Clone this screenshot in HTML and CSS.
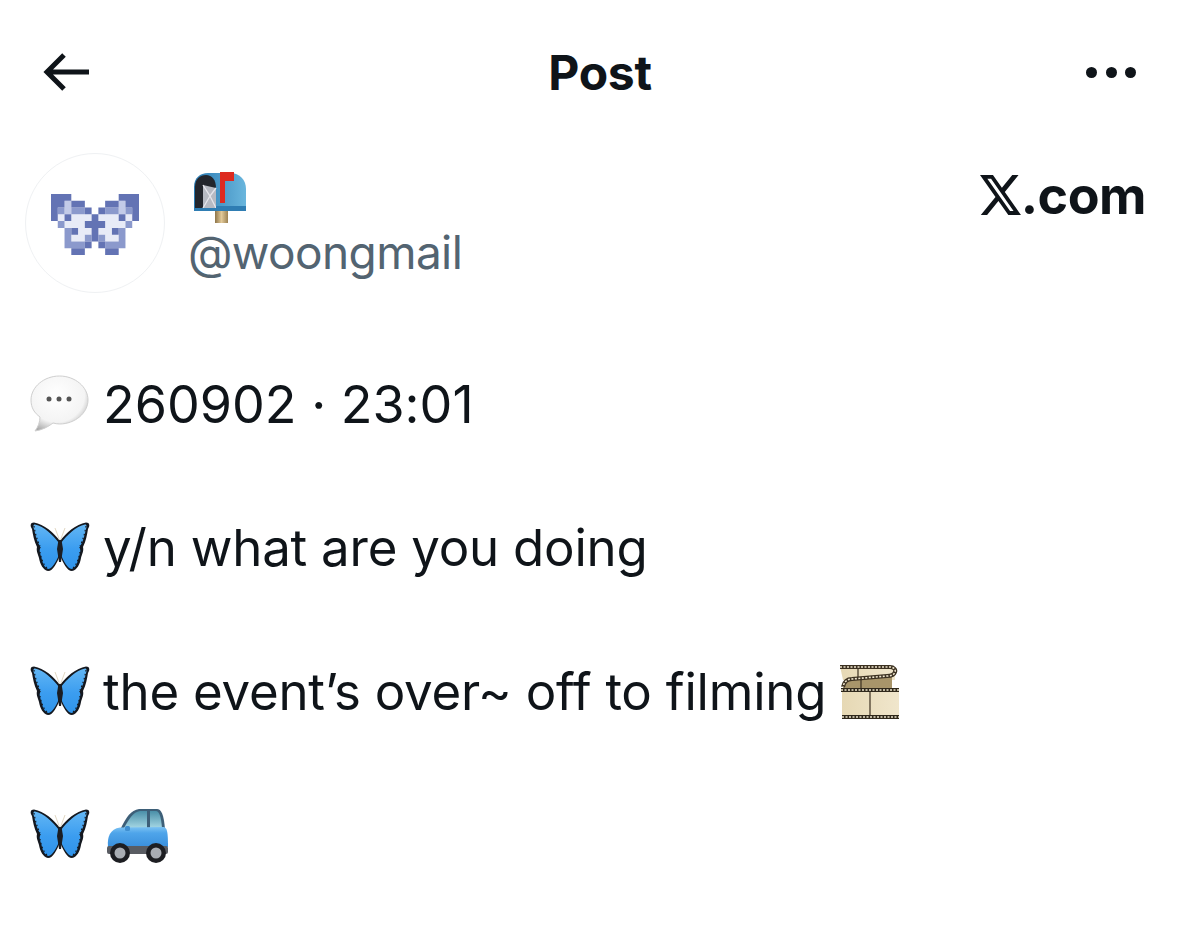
FILE: index.html
```html
<!DOCTYPE html>
<html lang="en">
<head>
    <meta charset="UTF-8">
    <meta name="viewport" content="width=device-width, initial-scale=1.0">
    <title>Post</title>
    <link rel="stylesheet" href="styles.css">
</head>
<body>
    <!-- shared emoji drawings -->
    <svg class="defs" width="0" height="0">
        <defs>
            <linearGradient id="wing" x1="0" y1="0" x2="0" y2="1">
                <stop offset="0" stop-color="#62b6f4"/>
                <stop offset="0.55" stop-color="#3b9df0"/>
                <stop offset="1" stop-color="#2f93ea"/>
            </linearGradient>
            <linearGradient id="carbody" x1="0" y1="0" x2="0" y2="1">
                <stop offset="0" stop-color="#7cc2f2"/>
                <stop offset="0.3" stop-color="#4fa5ea"/>
                <stop offset="1" stop-color="#3a8fdc"/>
            </linearGradient>
            <linearGradient id="glass" x1="0" y1="0" x2="0" y2="1">
                <stop offset="0" stop-color="#4a8fa8"/>
                <stop offset="1" stop-color="#a5d7e4"/>
            </linearGradient>
            <linearGradient id="box" x1="0" y1="0" x2="1" y2="0">
                <stop offset="0" stop-color="#2a7ab2"/>
                <stop offset="1" stop-color="#6ab6dd"/>
            </linearGradient>
            <linearGradient id="post" x1="0" y1="0" x2="1" y2="0">
                <stop offset="0" stop-color="#8d7448"/>
                <stop offset="0.5" stop-color="#e2c998"/>
                <stop offset="1" stop-color="#9c8253"/>
            </linearGradient>
            <linearGradient id="strip" x1="0" y1="0" x2="1" y2="0">
                <stop offset="0" stop-color="#e6d8b4"/>
                <stop offset="1" stop-color="#f0e6cc"/>
            </linearGradient>
            <radialGradient id="bubble" cx="0.45" cy="0.35" r="0.7">
                <stop offset="0" stop-color="#ffffff"/>
                <stop offset="0.7" stop-color="#f4f4f4"/>
                <stop offset="1" stop-color="#a8a8a8"/>
            </radialGradient>
            <g id="wing-half">
                <path d="M30 20C24 12 14 3 4 1.500 0 1.500 0 5 2 8c1 6 2 12 5 18-1 4 1 7 2 11 1 6 4 12 9 13 5 0 9-8 12-16z" fill="#14181f"/>
                <path d="M29 22C23 14 14 5.500 5 3.500 3 3.500 3 6 4 8c1.500 6 2.500 12 6 17.500 1 1 1 1.500 0 2-1 3 .5 6 1.500 9.500 1 5 3 10 7 11 4-1 7.500-7 10.500-14z" fill="url(#wing)"/>
                <path d="M4 5c1 7 3 14 6 20M10 31c1 6 3 12 7 16" fill="none" stroke="#14181f" stroke-width="1.200" stroke-dasharray="1.500 2.500"/>
            </g>
            <symbol id="butterfly" viewBox="0 0 60 52">
                <use href="#wing-half"/>
                <use href="#wing-half" transform="translate(60 0) scale(-1 1)"/>
                <path d="M28.500 19h3l1.500 9-2 13h-2l-2-13z" fill="#1b1d22"/>
                <path d="M29.500 19 25 7M30.500 19 35 7" stroke="#d9cdb4" stroke-width=".8" fill="none"/>
            </symbol>
        </defs>
    </svg>

    <header class="topbar">
        <svg class="back" viewBox="0 0 46 38" aria-hidden="true">
            <path d="M46 19H5M21 2 4 19l17 17" fill="none" stroke="#0f1419" stroke-width="5"/>
        </svg>
        <h1 class="title">Post</h1>
        <div class="more"><span></span><span></span><span></span></div>
    </header>

    <section class="author">
        <div class="avatar">
            <svg class="moth" viewBox="0 0 13 9" aria-hidden="true">
                <path fill="#e8ebf7" d="M1 3h1v1H1zM3 3h3v1H3zM7 3h3v1H7zM11 3h1v1h-1zM2 4h3v1H2zM8 4h3v1H8zM4 5h2v1H4zM7 5h2v1H7zM3 6h2v1H3zM8 6h2v1H8z"/>
                <path fill="#c3cbe8" d="M2 1h1v2H2zM10 1h1v2h-1z"/>
                <path fill="#8b99cc" d="M1 2h1v1H1zM3 2h2v1H3zM8 2h2v1H8zM11 2h1v1h-1zM1 4h1v1H1zM11 4h1v1h-1zM2 5h1v2H2zM10 5h1v2h-1zM5 6h1v1H5zM7 6h1v1H7zM2 7h3v1H2zM8 7h3v1H8z"/>
                <path fill="#6373b4" d="M0 0h3v1H0zM10 0h3v1h-3zM0 1h2v1H0zM3 1h2v1H3zM8 1h2v1H8zM11 1h2v1h-2zM0 2h1v2H0zM12 2h1v2h-1zM5 2h1v1H5zM7 2h1v1H7zM2 3h1v1H2zM6 3h1v1H6zM10 3h1v1h-1zM5 4h3v1H5zM3 5h1v1H3zM6 5h1v2H6zM9 5h1v1H9zM5 7h1v1H5zM7 7h1v1H7zM3 8h2v1H3zM8 8h2v1H8z"/>
            </svg>
        </div>
        <div class="names">
            <svg class="mailbox" viewBox="0 0 54 51" aria-hidden="true">
                <rect x="22" y="38" width="13" height="13" fill="url(#post)"/>
                <path d="M1 39V15C1 6 7 1 15 1h22c10 0 16 7 16 16v22z" fill="url(#box)"/>
                <path d="M2 36V15C2 7 7 3 13 3s10 5 10 13v20z" fill="#23262d"/>
                <path d="M10 36V13l13 3v20z" fill="#b7bac3"/>
                <path d="M10 13l7 11 6-8M10 36l7-12 6 12" fill="none" stroke="#e6e6ec" stroke-width="1.300"/>
                <path d="M23 34h30v5H1v-3h22z" fill="#2f7db3"/>
                <path d="M27 31V0h14v9h-9v22z" fill="#dd2a20"/>
            </svg>
            <div class="handle">@woongmail</div>
        </div>
        <div class="brand">
            <svg class="brand-x" viewBox="1.250 2.250 21.600 19.500" preserveAspectRatio="none" aria-hidden="true">
                <path d="M18.244 2.250h3.308l-7.227 8.260 8.502 11.240H16.170l-5.214-6.817L4.990 21.750H1.680l7.730-8.835L1.254 2.250H8.080l4.713 6.231zm-1.161 17.520h1.833L7.084 4.126H5.117z" fill="#0f1419"/>
            </svg>
            <span>.com</span>
        </div>
    </section>

    <main class="post">
        <p class="line date">
            <svg class="emoji bubble" viewBox="0 0 60 57" aria-hidden="true">
                <path d="M29.500 1C14 1 1 12 1 25c0 8 3.500 13 9 17 0 5-2 10-5 14 7-1 13-4 18-8 2 .5 4.500 1 6.500 1C45 49 58 38 58 25S45 1 29.500 1z" fill="url(#bubble)" stroke="#cfcfcf"/>
                <circle cx="19" cy="24" r="2.500" fill="#555"/><circle cx="29" cy="24" r="2.500" fill="#555"/><circle cx="39" cy="24" r="2.500" fill="#555"/>
            </svg>
            260902 · 23:01
        </p>
        <p class="line">
            <svg class="emoji"><use href="#butterfly"/></svg>
            y/n what are you doing
        </p>
        <p class="line">
            <svg class="emoji"><use href="#butterfly"/></svg>
            the event’s over~ off to filming
            <svg class="emoji film" viewBox="0 0 60 58" aria-hidden="true">
                <path d="M1 3h50c3 0 5 3 5 6v8H4z" fill="url(#strip)"/>
                <path d="M4 25c0-6 3-9 9-9l40-3 0 13z" fill="#a8956a"/>
                <path d="M3 27h57v28H3z" fill="url(#strip)"/>
                <path d="M19 5v12M22 17v9M31 28v26" stroke="#3c3121" stroke-width="1.200"/>
                <g fill="none">
                    <path d="M1 4h50c4 0 6 3 5 5-1 3-4 4-8 4l-35 3c-5 0-8 3-9 8" stroke="#3c3121" stroke-width="4"/>
                    <path d="M1 4h50c4 0 6 3 5 5-1 3-4 4-8 4l-35 3c-5 0-8 3-9 8" stroke="#efe6cf" stroke-width="1.600" stroke-dasharray="2 1.500"/>
                    <path d="M2 27h58M3 54h57" stroke="#2f281b" stroke-width="4"/>
                    <path d="M2 27h58M3 54h57" stroke="#efe6cf" stroke-width="1.600" stroke-dasharray="2 1.500"/>
                </g>
            </svg>
        </p>
        <p class="line">
            <svg class="emoji"><use href="#butterfly"/></svg>
            <svg class="emoji car" viewBox="0 0 62 54" aria-hidden="true">
                <path d="M13 21C19 8 24 1 32 0h18c4 0 7 5 8 21z" fill="#3d5f78"/>
                <path d="M17 19C22 10 26 3 33 2h7v17z" fill="url(#glass)"/>
                <path d="M43 2h6c3 0 5 5 6 17H43z" fill="url(#glass)"/>
                <path d="M1 38C0 28 3 20 13 18.500L56 18c4 0 5 4 5 20z" fill="url(#carbody)"/>
                <rect x="18" y="17" width="5" height="5" rx="1.500" fill="#3f8fd0"/>
                <rect x="0" y="37" width="61" height="8" rx="2" fill="#595c62"/>
                <circle cx="13" cy="44" r="10" fill="#1d1e22"/><circle cx="13" cy="44" r="5.500" fill="#a9adb3"/>
                <circle cx="49" cy="44" r="10" fill="#1d1e22"/><circle cx="49" cy="44" r="5.500" fill="#a9adb3"/>
            </svg>
        </p>
    </main>
</body>
</html>
```

FILE: styles.css
```css
body {
    font-family: Inter, "Liberation Sans", sans-serif;
    font-feature-settings: "calt" 0;
    margin: 0;
    padding: 0;
    background-color: #fff;
    color: #0f1419;
}

.defs {
    position: absolute;
}

.topbar {
    display: grid;
    grid-template-columns: 1fr auto 1fr;
    align-items: center;
    height: 144px;
    padding: 0 64px;
}

.back {
    width: 46px;
    height: 38px;
    margin-left: -21px;
}

.title {
    margin: 0;
    font-size: 48px;
    font-weight: 700;
    letter-spacing: -0.3px;
}

.more {
    display: flex;
    gap: 8.5px;
    justify-self: end;
}

.more span {
    width: 11px;
    height: 11px;
    border-radius: 50%;
    background-color: #0f1419;
}

.author {
    display: flex;
    align-items: flex-start;
    padding: 9px 54px 0 25px;
    height: 141px;
}

.avatar {
    width: 140px;
    height: 140px;
    box-sizing: border-box;
    border: 1px solid #eff1f3;
    border-radius: 50%;
    display: flex;
    align-items: center;
    justify-content: center;
}

.moth {
    width: 88px;
    height: 61px;
    margin-top: 3px;
    filter: blur(0.3px);
}

.names {
    margin-left: 23px;
    flex: 1;
}

.mailbox {
    display: block;
    width: 54px;
    height: 51px;
    margin: 19px 0 0 5px;
}

.handle {
    font-size: 46px;
    line-height: 52px;
    margin-top: 3px;
    color: #536471;
    letter-spacing: -0.6px;
}

.brand {
    display: flex;
    align-items: flex-start;
    font-size: 52px;
    font-weight: 700;
    line-height: 60px;
    margin-top: 13px;
    letter-spacing: -0.5px;
}

.brand-x {
    width: 41px;
    height: 40px;
    margin-top: 9px;
}

.post {
    padding: 0 0 0 30px;
}

.line {
    margin: 0;
    height: 143.3px;
    display: flex;
    align-items: flex-start;
    gap: 13px;
    font-size: 51px;
    line-height: 72px;
    letter-spacing: -0.23px;
}

.post .line:first-child {
    margin-top: 75px;
}

.date {
    font-size: 52px;
    letter-spacing: 0;
}

.emoji {
    width: 60px;
    height: 52px;
    flex: none;
    margin-top: 9px;
}

.bubble {
    height: 57px;
    margin-top: 6px;
}

.film {
    height: 58px;
    margin-top: 7px;
}

.car {
    width: 62px;
    height: 54px;
    margin: 10px 0 0 4px;
}
```
